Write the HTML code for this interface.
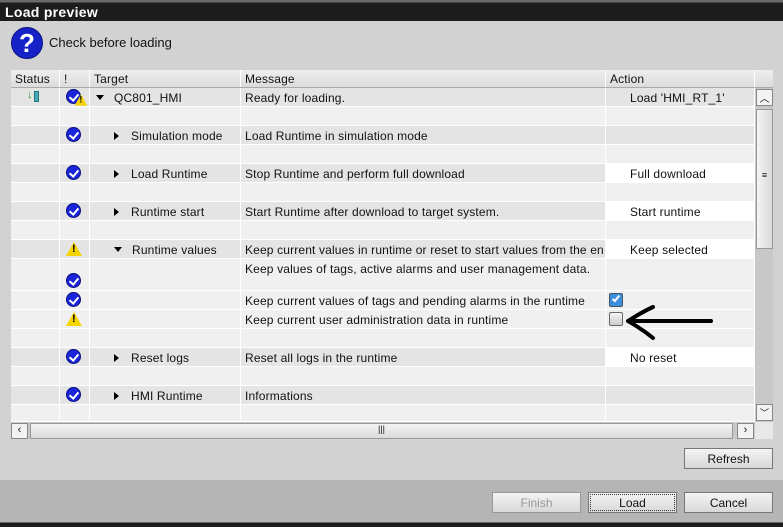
<!DOCTYPE html>
<html><head><style>
*{margin:0;padding:0;box-sizing:border-box}
body{width:783px;height:527px;overflow:hidden;background:#d2d2d2;font-family:"Liberation Sans",sans-serif;font-size:12px;color:#111;position:relative}
.abs{position:absolute}
.title{left:0;top:0;width:783px;height:21px;background:linear-gradient(#6a6a6a 0,#6a6a6a 2px,#1c1c1c 3px);color:#fff;font-weight:bold;font-size:14px;padding:4px 5px;letter-spacing:.3px}
.row{position:absolute;left:11px;width:744px;height:19px;border-bottom:1px solid #fff;letter-spacing:.15px}
.c{position:absolute;top:0;height:100%;border-right:1px solid #fff;padding:3px 4px;white-space:nowrap;overflow:hidden}
.ico{position:absolute;left:66px;width:15px;height:15px;border-radius:50%;background:#1a24d8;border:1px solid #0a0f80}
.ico:after{content:"";position:absolute;left:4px;top:2px;width:4px;height:7px;border:solid #fff;border-width:0 2.5px 2.5px 0;transform:rotate(40deg)}
.warn{position:absolute;left:66px;width:0;height:0;border-left:8px solid transparent;border-right:8px solid transparent;border-bottom:14px solid #f5d400}
.warn:after{content:"!";position:absolute;left:-2px;top:1px;font-size:11px;font-weight:bold;color:#000}
.tri{display:inline-block;width:0;height:0;border-top:4px solid transparent;border-bottom:4px solid transparent;border-left:5px solid #000;margin-right:12px;vertical-align:0}
.tdn{display:inline-block;width:0;height:0;border-left:4px solid transparent;border-right:4px solid transparent;border-top:5px solid #000;margin-right:10px;vertical-align:2px}
.btn{position:absolute;height:21px;border:1px solid #777;background:linear-gradient(#f4f4f4,#d8d8d8);text-align:center;padding-top:3px;font-size:12px}
</style></head><body>
<div class="abs title">Load preview</div>
<div class="abs" style="left:11px;top:27px;width:32px;height:32px;border-radius:50%;background:#1522c8;border:1px solid #0a1080;color:#fff;font-weight:bold;font-size:26px;text-align:center;line-height:31px">?</div>
<div class="abs" style="left:49px;top:35px;font-size:13px">Check before loading</div>
<div class="abs" style="left:11px;top:70px;width:762px;height:369px;background:#e8e8e8"></div>
<div class="abs" style="left:11px;top:70px;width:762px;height:18px;background:linear-gradient(#eee,#dcdcdc);border-bottom:1px solid #aaa;letter-spacing:.15px">
<div class="c" style="left:0;width:49px;padding-top:2px">Status</div>
<div class="c" style="left:49px;width:30px;padding-top:2px">!</div>
<div class="c" style="left:79px;width:151px;padding-top:2px">Target</div>
<div class="c" style="left:230px;width:365px;padding-top:2px">Message</div>
<div class="c" style="left:595px;width:149px;padding-top:2px">Action</div>
</div>
<div id="rows"></div>
<script>
var R=[
[88,19,'#e4e4e4','<span class="tdn"></span>QC801_HMI','Ready for loading.',"Load 'HMI_RT_1'",'cw',0,'#e4e4e4'],
[107,19,'#f0f0f0','','','','',0],
[126,19,'#e4e4e4','<span style="padding-left:18px"></span><span class="tri"></span>Simulation mode','Load Runtime in simulation mode','','c',0],
[145,19,'#f0f0f0','','','','',0],
[164,19,'#e4e4e4','<span style="padding-left:18px"></span><span class="tri"></span>Load Runtime','Stop Runtime and perform full download','Full download','c',1],
[183,19,'#f0f0f0','','','','',0],
[202,19,'#e4e4e4','<span style="padding-left:18px"></span><span class="tri"></span>Runtime start','Start Runtime after download to target system.','Start runtime','c',1],
[221,19,'#f0f0f0','','','','',0],
[240,19,'#e4e4e4','<span style="padding-left:18px"></span><span class="tdn"></span>Runtime values','Keep current values in runtime or reset to start values from the en','Keep selected','w',1],
[259,32,'#f0f0f0','','Keep values of tags, active alarms and user management data.','','c2',0],
[291,19,'#f0f0f0','','Keep current values of tags and pending alarms in the runtime','','c',0],
[310,19,'#f0f0f0','','Keep current user administration data in runtime','','w',0],
[329,19,'#f0f0f0','','','','',0],
[348,19,'#e4e4e4','<span style="padding-left:18px"></span><span class="tri"></span>Reset logs','Reset all logs in the runtime','No reset','c',1],
[367,19,'#f0f0f0','','','','',0],
[386,19,'#e4e4e4','<span style="padding-left:18px"></span><span class="tri"></span>HMI Runtime','Informations','','c',0],
[405,17,'#f0f0f0','','','','',0]];
var h='';
R.forEach(function(r){
var ac=r[7]?'#fff':r[2];
h+='<div class="row" style="top:'+r[0]+'px;height:'+r[1]+'px;background:'+r[2]+'">';
h+='<div class="c" style="left:0;width:49px"></div><div class="c" style="left:49px;width:30px"></div>';
h+='<div class="c" style="left:79px;width:151px;padding-left:6px">'+r[3]+'</div>';
h+='<div class="c" style="left:230px;width:365px">'+r[4]+'</div>';
h+='<div class="c" style="left:595px;width:149px;background:'+ac+';padding-left:24px">'+r[5]+'</div>';
if(r[6]=='c')h+='<div class="ico" style="left:55px;top:1px"></div>';
if(r[6]=='c2')h+='<div class="ico" style="left:55px;top:14px"></div>';
if(r[6]=='w')h+='<div class="warn" style="left:55px;top:2px"></div>';
if(r[6]=='cw')h+='<div class="ico" style="left:55px;top:1px"></div><div class="warn" style="left:62px;top:5px;transform:scale(.8)"></div>';
h+='</div>';});
document.getElementById('rows').innerHTML=h;
</script>
<div class="abs" style="left:27px;top:89px;font-size:11px;color:#1a9a30;font-weight:bold">↓</div>
<div class="abs" style="left:34px;top:91px;width:5px;height:11px;background:#4ab;border:1px solid #277"></div>
<div class="abs" style="left:609px;top:293px;width:14px;height:14px;border:1px solid #456;background:#3a8ee0;border-radius:2px"><div style="position:absolute;left:4px;top:0;width:4px;height:8px;border:solid #fff;border-width:0 2px 2px 0;transform:rotate(40deg)"></div></div>
<div class="abs" style="left:609px;top:312px;width:14px;height:14px;border:1px solid #666;background:linear-gradient(#f4f4f4,#ccc);border-radius:2px"></div>
<svg class="abs" style="left:620px;top:302px" width="100" height="40"><path d="M8 19 L91 19 M8 19 Q22 10 33 5 M8 19 Q22 27 33 36" stroke="#000" stroke-width="4" fill="none" stroke-linecap="round"/></svg>
<div class="abs" style="left:755px;top:88px;width:18px;height:334px;background:#c8c8c8"></div>
<div class="abs" style="left:756px;top:89px;width:17px;height:17px;border:1px solid #888;background:#f2f2f2;text-align:center;font-size:10px">︿</div>
<div class="abs" style="left:756px;top:109px;width:17px;height:140px;border:1px solid #999;background:linear-gradient(90deg,#f4f4f4,#dadada);text-align:center;padding-top:60px;font-size:9px">≡</div>
<div class="abs" style="left:756px;top:404px;width:17px;height:17px;border:1px solid #888;background:#f2f2f2;text-align:center;font-size:9px;line-height:16px">﹀</div>
<div class="abs" style="left:11px;top:422px;width:744px;height:17px;background:#c8c8c8"></div>
<div class="abs" style="left:11px;top:423px;width:17px;height:16px;border:1px solid #888;background:#f2f2f2;text-align:center;font-size:11px">‹</div>
<div class="abs" style="left:30px;top:423px;width:703px;height:16px;border:1px solid #999;background:linear-gradient(#f4f4f4,#dadada);text-align:center;font-size:9px">|||</div>
<div class="abs" style="left:737px;top:423px;width:17px;height:16px;border:1px solid #888;background:#f2f2f2;text-align:center;font-size:11px">›</div>
<div class="btn" style="left:684px;top:448px;width:89px">Refresh</div>
<div class="abs" style="left:0;top:480px;width:783px;height:42px;background:#b5b5b5"></div>
<div class="abs" style="left:0;top:522px;width:783px;height:5px;background:#1c1c1c;border-top:1px solid #666"></div>
<div class="btn" style="left:492px;top:492px;width:89px;color:#999;border-color:#999">Finish</div>
<div class="btn" style="left:588px;top:492px;width:89px;outline:1px dotted #333;outline-offset:-3px">Load</div>
<div class="btn" style="left:684px;top:492px;width:89px">Cancel</div>
</body></html>
